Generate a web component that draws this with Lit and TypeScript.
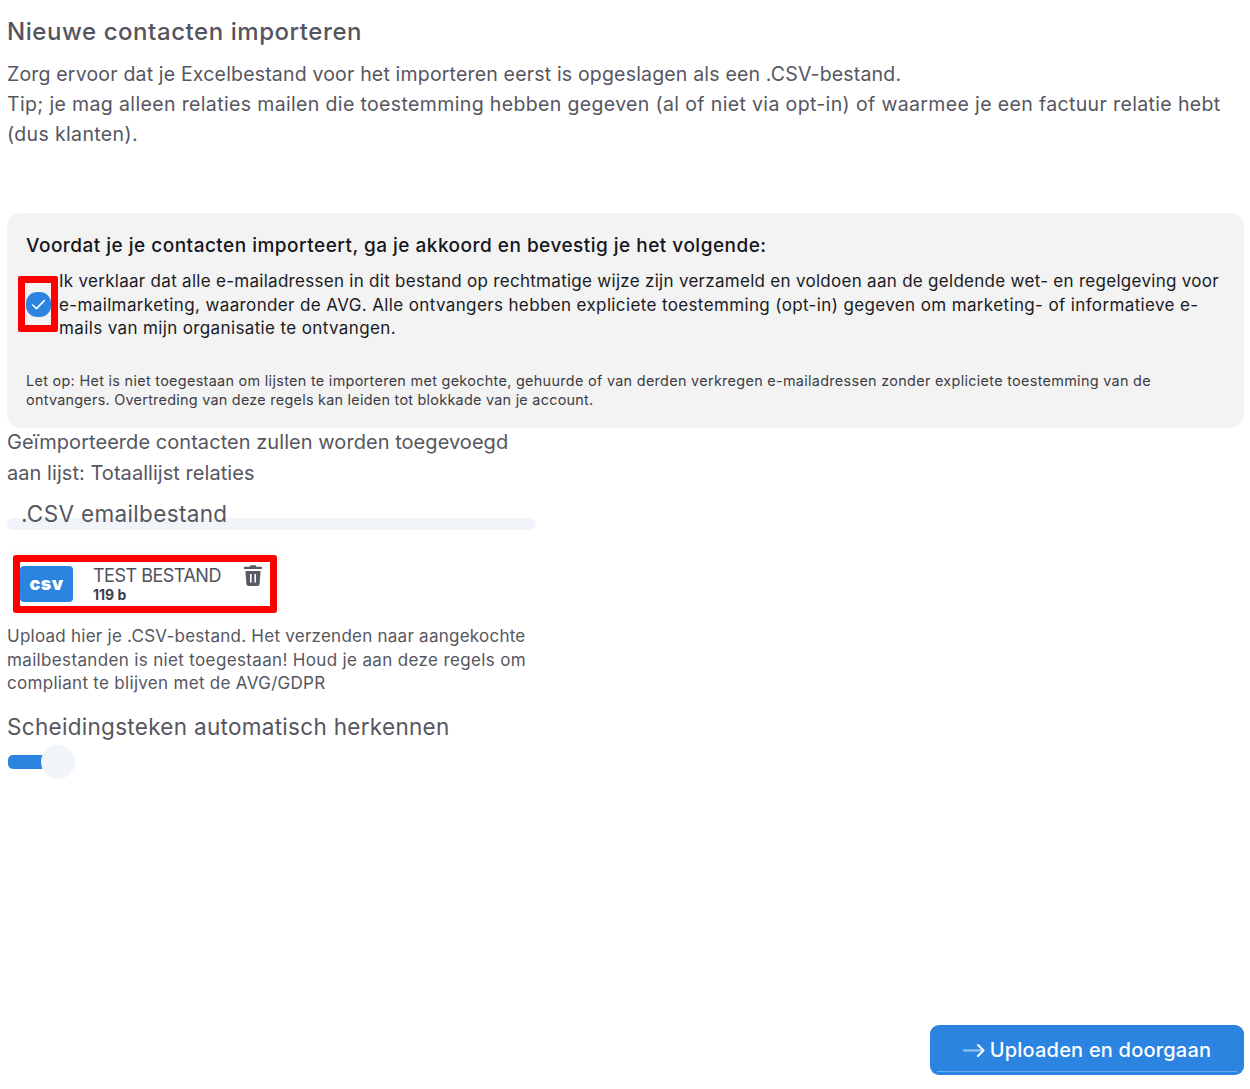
import { LitElement, html, css } from "lit";
import { customElement } from "lit/decorators.js";

@customElement("app-root")
export class AppRoot extends LitElement {
  static styles = css`
    :host {
      display: block;
      width: 1250px;
      height: 1089px;
      background: #fff;
      font-family: Inter, "Liberation Sans", sans-serif;
      color: #565660;
      overflow: hidden;
    }
    .page {
      height: 1089px;
      box-sizing: border-box;
      padding: 16px 6px 14px 7px;
      display: flex;
      flex-direction: column;
    }
    h1 {
      margin: 0;
      font-size: 24px;
      line-height: 32px;
      font-weight: 500;
      letter-spacing: 0.56px;
      color: #54545e;
    }
    .intro {
      margin: 11px 0 0;
      font-size: 19.5px;
      line-height: 30px;
      white-space: nowrap;
      letter-spacing: 0.36px;
    }
    .intro .l1 {
      letter-spacing: 0.18px;
    }
    .notice {
      margin-top: 64px;
      height: 215px;
      box-sizing: border-box;
      background: #f3f3f3;
      border-radius: 14px;
      padding: 20px 19px;
      color: #1a1a22;
    }
    .notice h2 {
      margin: 0;
      font-size: 19px;
      line-height: 26px;
      font-weight: 500;
      letter-spacing: 0.485px;
      color: #16161c;
    }
    .agree {
      display: flex;
      align-items: center;
      margin-top: 11px;
    }
    .checkframe {
      width: 40px;
      height: 56px;
      margin: 0 1px 2px -8px;
      box-sizing: border-box;
      border: 7px solid #fe0000;
      border-radius: 2px;
      display: flex;
      align-items: center;
      justify-content: center;
      flex: none;
    }
    .check {
      width: 25px;
      height: 25px;
      flex: none;
      border-radius: 45%;
      background: #2a84e0;
      display: flex;
      align-items: center;
      justify-content: center;
    }
    .agree p {
      margin: 0;
      font-size: 17px;
      line-height: 23.5px;
      white-space: nowrap;
      letter-spacing: 0.37px;
    }
    .agree p .l1 {
      letter-spacing: 0.285px;
    }
    .small {
      margin: 30px 0 0;
      font-size: 14.4px;
      line-height: 19px;
      white-space: nowrap;
      letter-spacing: 0.26px;
      color: #3c3c44;
    }
    .small .l1 {
      letter-spacing: 0.313px;
    }
    .listinfo {
      font-size: 20px;
      line-height: 31px;
      margin-top: -1px;
      letter-spacing: 0.05px;
    }
    .field {
      width: 529px;
    }
    .label {
      font-size: 22.5px;
      line-height: 30px;
      padding-left: 14px;
      margin-top: 10px;
      letter-spacing: 0.35px;
      position: relative;
      z-index: 1;
    }
    .track {
      height: 12px;
      margin-top: -11px;
      background: #f1f4f8;
      border-radius: 6px;
    }
    .file {
      margin: 25px 0 0 6px;
      width: 264px;
      height: 58px;
      box-sizing: border-box;
      border: 7px solid #fe0000;
      border-radius: 3px;
      display: flex;
      align-items: center;
      background: #fff;
      box-shadow: 0 0 0 5px #fdfdfd;
    }
    .badge {
      width: 53px;
      height: 36px;
      flex: none;
      border-radius: 4px;
      background: #2a84e0;
      color: #fff;
      font-size: 18px;
      font-weight: 900;
      display: flex;
      align-items: center;
      justify-content: center;
      letter-spacing: 0.4px;
      padding-bottom: 1px;
      box-sizing: border-box;
    }
    .fname {
      margin: -2px 0 0 20px;
      width: 151px;
      flex: none;
    }
    .fname b {
      display: block;
      font-size: 14px;
      line-height: 15px;
      font-weight: 700;
      color: #40404c;
    }
    .fname span {
      display: block;
      font-size: 18px;
      line-height: 23px;
      letter-spacing: -0.5px;
      color: #50505c;
    }
    .trash {
      align-self: flex-start;
      margin-top: 2px;
      flex: none;
    }
    .help {
      margin: 12px 0 0;
      font-size: 17px;
      line-height: 23.5px;
      white-space: nowrap;
      letter-spacing: 0.3px;
    }
    .help .l1 {
      letter-spacing: 0.25px;
    }
    .help .l2 {
      letter-spacing: 0.35px;
    }
    .sep {
      font-size: 22.5px;
      line-height: 30px;
      margin-top: 16px;
      letter-spacing: 0.3px;
    }
    .toggle {
      margin: 2px 0 0 1px;
      width: 67px;
      height: 36px;
      display: flex;
      align-items: center;
      position: relative;
    }
    .bar {
      width: 40px;
      height: 14px;
      border-radius: 5px;
      background: #2a84e0;
    }
    .knob {
      position: absolute;
      left: 33px;
      top: 1px;
      width: 34px;
      height: 34px;
      border-radius: 50%;
      background: #f1f4f8;
    }
    .spacer {
      flex: 1;
    }
    .actions {
      display: flex;
      justify-content: flex-end;
    }
    .btn {
      width: 314px;
      height: 50px;
      box-sizing: border-box;
      border-radius: 9px;
      background: #2a84e0;
      color: #fff;
      font-size: 20px;
      font-weight: 500;
      letter-spacing: 0.2px;
      display: flex;
      align-items: center;
      justify-content: center;
      gap: 4px;
      position: relative;
    }
    .btn::after {
      content: "";
      position: absolute;
      left: 7px;
      right: 7px;
      bottom: 3px;
      height: 1px;
      background: #6aa9ea;
    }
  `;

  render() {
    return html`
      <div class="page">
        <h1>Nieuwe contacten importeren</h1>
        <p class="intro">
          <span class="l1">Zorg ervoor dat je Excelbestand voor het importeren eerst is opgeslagen als een .CSV-bestand.</span><br />
          Tip; je mag alleen relaties mailen die toestemming hebben gegeven (al of niet via opt-in) of waarmee je een factuur relatie hebt<br />
          (dus klanten).
        </p>
        <section class="notice">
          <h2>Voordat je je contacten importeert, ga je akkoord en bevestig je het volgende:</h2>
          <div class="agree">
            <div class="checkframe">
              <div class="check">
                <svg width="15" height="15" viewBox="0 0 15 15" fill="none">
                  <path d="M1.7 8l3.8 3.6 7.7-8" stroke="#fff" stroke-width="1.6" stroke-linecap="round" stroke-linejoin="round" />
                </svg>
              </div>
            </div>
            <p>
              <span class="l1">Ik verklaar dat alle e-mailadressen in dit bestand op rechtmatige wijze zijn verzameld en voldoen aan de geldende wet- en regelgeving voor</span><br />
              e-mailmarketing, waaronder de AVG. Alle ontvangers hebben expliciete toestemming (opt-in) gegeven om marketing- of informatieve e-<br />
              mails van mijn organisatie te ontvangen.
            </p>
          </div>
          <p class="small">
            <span class="l1">Let op: Het is niet toegestaan om lijsten te importeren met gekochte, gehuurde of van derden verkregen e-mailadressen zonder expliciete toestemming van de</span><br />
            ontvangers. Overtreding van deze regels kan leiden tot blokkade van je account.
          </p>
        </section>
        <div class="listinfo">
          Geïmporteerde contacten zullen worden toegevoegd<br />
          aan lijst: Totaallijst relaties
        </div>
        <div class="field">
          <div class="label">.CSV emailbestand</div>
          <div class="track"></div>
        </div>
        <div class="file">
          <div class="badge">csv</div>
          <div class="fname">
            <span>TEST BESTAND</span>
            <b>119 b</b>
          </div>
          <svg class="trash" width="18" height="22" viewBox="0 0 18 22" fill="#5a5a66">
            <path d="M6.5 1.2h5l.8 1.6H17c.6 0 1 .4 1 1v1.1H0V3.8c0-.6.4-1 1-1h4.7z" />
            <path fill-rule="evenodd" d="M1.4 7h15.2l-1 13c-.1 1.1-.9 1.9-2 1.9H4.4c-1.1 0-1.9-.8-2-1.9zM6 10v8.5h1.6V10zm4.4 0v8.5H12V10z" />
          </svg>
        </div>
        <p class="help">
          <span class="l1">Upload hier je .CSV-bestand. Het verzenden naar aangekochte</span><br />
          <span class="l2">mailbestanden is niet toegestaan! Houd je aan deze regels om</span><br />
          compliant te blijven met de AVG/GDPR
        </p>
        <div class="sep">Scheidingsteken automatisch herkennen</div>
        <div class="toggle">
          <div class="bar"></div>
          <div class="knob"></div>
        </div>
        <div class="spacer"></div>
        <div class="actions">
          <div class="btn">
            <svg width="23" height="14" viewBox="0 0 23 14" fill="none" stroke-width="2" stroke-linecap="round" stroke-linejoin="round">
              <path d="M1 7.5h18" stroke="#9cc7f2" />
              <path d="M15 2l5.5 5.5L15 13" stroke="#fff" />
            </svg>
            <span>Uploaden en doorgaan</span>
          </div>
        </div>
      </div>
    `;
  }
}
